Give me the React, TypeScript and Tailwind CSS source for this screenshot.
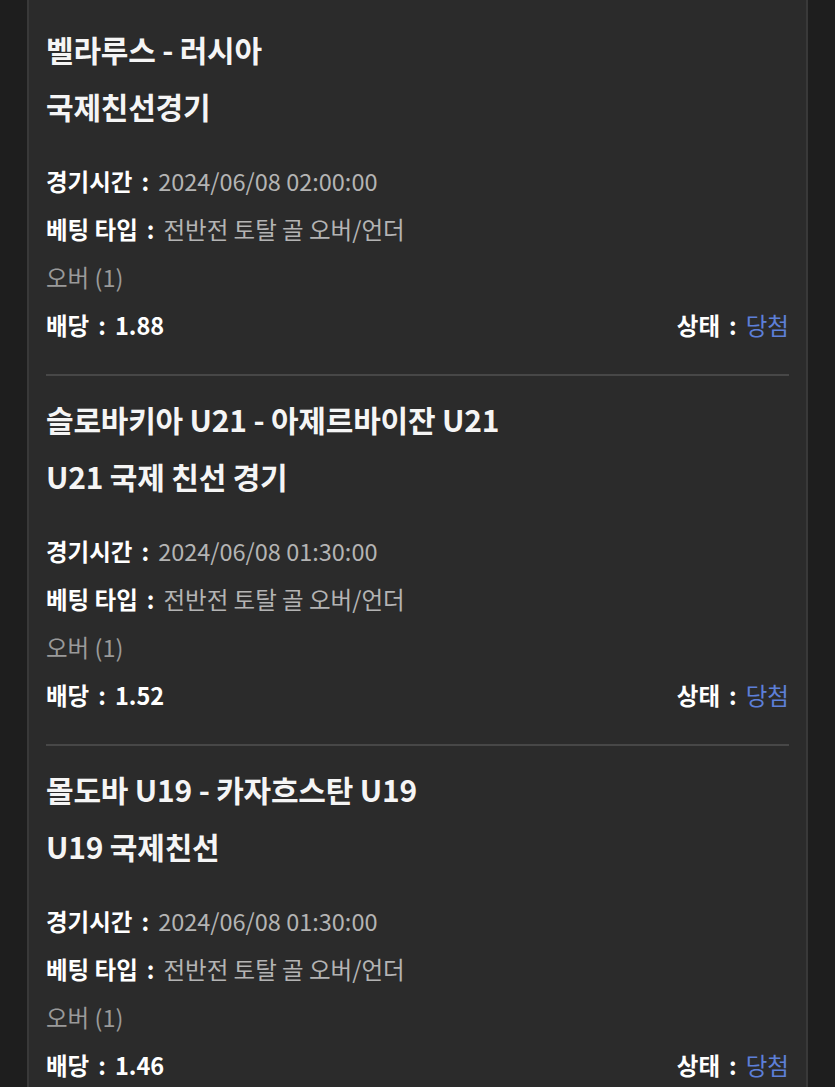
const bets = [
  {
    match: '벨라루스 - 러시아',
    league: '국제친선경기',
    time: '2024/06/08 02:00:00',
    type: '전반전 토탈 골 오버/언더',
    pick: '오버 (1)',
    odds: '1.88',
    status: '당첨',
  },
  {
    match: '슬로바키아 U21 - 아제르바이잔 U21',
    league: 'U21 국제 친선 경기',
    time: '2024/06/08 01:30:00',
    type: '전반전 토탈 골 오버/언더',
    pick: '오버 (1)',
    odds: '1.52',
    status: '당첨',
  },
  {
    match: '몰도바 U19 - 카자흐스탄 U19',
    league: 'U19 국제친선',
    time: '2024/06/08 01:30:00',
    type: '전반전 토탈 골 오버/언더',
    pick: '오버 (1)',
    odds: '1.46',
    status: '당첨',
  },
];

function Colon() {
  return <span className="mx-[9px] font-bold text-white">:</span>;
}

function BetItem({ bet, last }: { bet: (typeof bets)[number]; last: boolean }) {
  return (
    <div className="pt-[15px]">
      {/* 경기명 / 리그 */}
      <div className="text-[30px] leading-[57px] font-bold text-[#f5f5f5] tracking-[-0.2px]">
        <div>{bet.match}</div>
        <div>{bet.league}</div>
      </div>

      {/* 베팅 상세 */}
      <div className="mt-[22px] text-[23.5px] leading-[48px]">
        <div>
          <span className="font-bold text-white">경기시간</span>
          <Colon />
          <span className="text-[#b4b4b4]">{bet.time}</span>
        </div>
        <div>
          <span className="font-bold text-white">베팅 타입</span>
          <Colon />
          <span className="text-[#b4b4b4]">{bet.type}</span>
        </div>
        <div className="text-[#9a9a9a]">{bet.pick}</div>
        <div className="flex justify-between">
          <span className="font-bold text-white">
            배당
            <Colon />
            {bet.odds}
          </span>
          <span>
            <span className="font-bold text-white">상태</span>
            <Colon />
            <span className="text-[#5d7fd8]">{bet.status}</span>
          </span>
        </div>
      </div>

      <div className="pb-[25px]" />
      {!last && <div className="h-[2px] bg-[#474747]" />}
    </div>
  );
}

export default function App() {
  return (
    <div
      className="min-h-screen bg-[#1e1e1e] px-[27px] overflow-hidden"
      style={{ fontFamily: '"Noto Sans CJK KR", "Noto Sans", sans-serif' }}
    >
      <div className="w-[781px] min-h-screen bg-[#2b2b2b] border-x-2 border-[#393939] px-[17px] pt-[6px]">
        {bets.map((bet, i) => (
          <BetItem key={i} bet={bet} last={i === bets.length - 1} />
        ))}
      </div>
    </div>
  );
}
